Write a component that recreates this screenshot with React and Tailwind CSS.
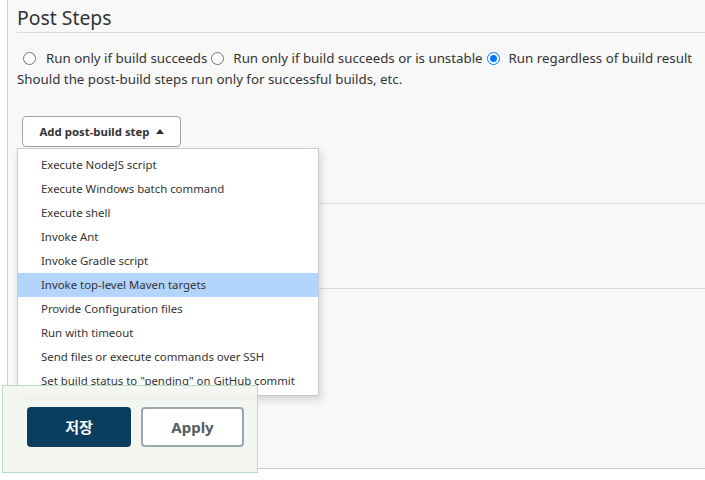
import { useState } from 'react';

const OPTIONS = [
  'Run only if build succeeds',
  'Run only if build succeeds or is unstable',
  'Run regardless of build result',
];

const STEPS = [
  'Execute NodeJS script',
  'Execute Windows batch command',
  'Execute shell',
  'Invoke Ant',
  'Invoke Gradle script',
  'Invoke top-level Maven targets',
  'Provide Configuration files',
  'Run with timeout',
  'Send files or execute commands over SSH',
  'Set build status to "pending" on GitHub commit',
];

function Radio({ checked }) {
  return (
    <span
      className={
        checked
          ? 'w-[13px] h-[13px] rounded-full border border-[#0075ff] flex items-center justify-center bg-white shrink-0'
          : 'block w-[13px] h-[13px] rounded-full border border-[#767676] bg-white shrink-0'
      }
    >
      {checked && <span className="w-[7px] h-[7px] rounded-full bg-[#0075ff]" />}
    </span>
  );
}

export default function App() {
  const [selected, setSelected] = useState(2);
  const [hover] = useState(5);

  return (
    <div
      className="relative w-[705px] h-[480px] bg-white overflow-hidden text-[#333]"
      style={{ fontFamily: '"Noto Sans", "Noto Sans CJK KR", sans-serif' }}
    >
      {/* Panel */}
      <div className="ml-[7px] h-[469px] bg-[#f8f8f8] border-l border-b border-l-[#c9ced3] border-b-[#c3cfd4] pl-[9px] flex flex-col">
        <h2 className="text-[19.4px] leading-[26px] pt-[5px] pb-[1px] border-b border-[#dcdcdc] font-normal">
          Post Steps
        </h2>

        <div className="flex items-center mt-[15px] text-[13.3px] leading-[20px]">
          {OPTIONS.map((label, i) => (
            <label
              key={label}
              className="flex items-center cursor-pointer"
              onClick={() => setSelected(i)}
            >
              <span className={i === 0 ? 'ml-[6px] mr-[10px]' : 'ml-[4px] mr-[9px]'}>
                <Radio checked={selected === i} />
              </span>
              <span>{label}</span>
            </label>
          ))}
        </div>
        <p className="text-[13.3px] leading-[20px] mt-[1px]">
          Should the post-build steps run only for successful builds, etc.
        </p>

        <div className="mt-[27px] ml-[5px]">
          <button className="h-[31px] w-[159px] border border-[#9aa3ab] rounded-[4px] bg-white text-[11.4px] font-bold text-[#333] flex items-center justify-center gap-[6px]">
            Add post-build step
            <svg width="8" height="5" viewBox="0 0 8 5">
              <path d="M0 5 L4 0 L8 5 Z" fill="#333" />
            </svg>
          </button>
        </div>

        <div className="h-[57px] border-b border-[#dcdcdc]" />
        <div className="h-[85px] border-b border-[#dcdcdc]" />
      </div>

      {/* Dropdown menu */}
      <ul className="absolute left-[17px] top-[148px] w-[302px] h-[248px] bg-white border border-[#c3ccd4] shadow-[2px_4px_8px_rgba(0,0,0,0.15)] py-[4px] text-[11.4px]">
        {STEPS.map((s, i) => (
          <li
            key={s}
            className={
              i === hover
                ? 'h-[24px] leading-[24px] pl-[23px] bg-[#b3d4fd]'
                : 'h-[24px] leading-[24px] pl-[23px]'
            }
          >
            {s}
          </li>
        ))}
      </ul>

      {/* Sticky footer */}
      <div className="absolute left-[2px] top-[385px] w-[256px] h-[88px] bg-[#f3f6f0]/90 border border-[#b7dbc5] flex gap-[10px] pl-[24px] pt-[21px]">
        <button className="w-[104px] h-[40px] rounded-[4px] bg-[#0a3d5e] text-white font-bold text-[15px]">
          저장
        </button>
        <button className="w-[103px] h-[40px] rounded-[4px] bg-white border-2 border-[#9ba6af] text-[#555b62] font-bold text-[15px]">
          Apply
        </button>
      </div>
    </div>
  );
}
